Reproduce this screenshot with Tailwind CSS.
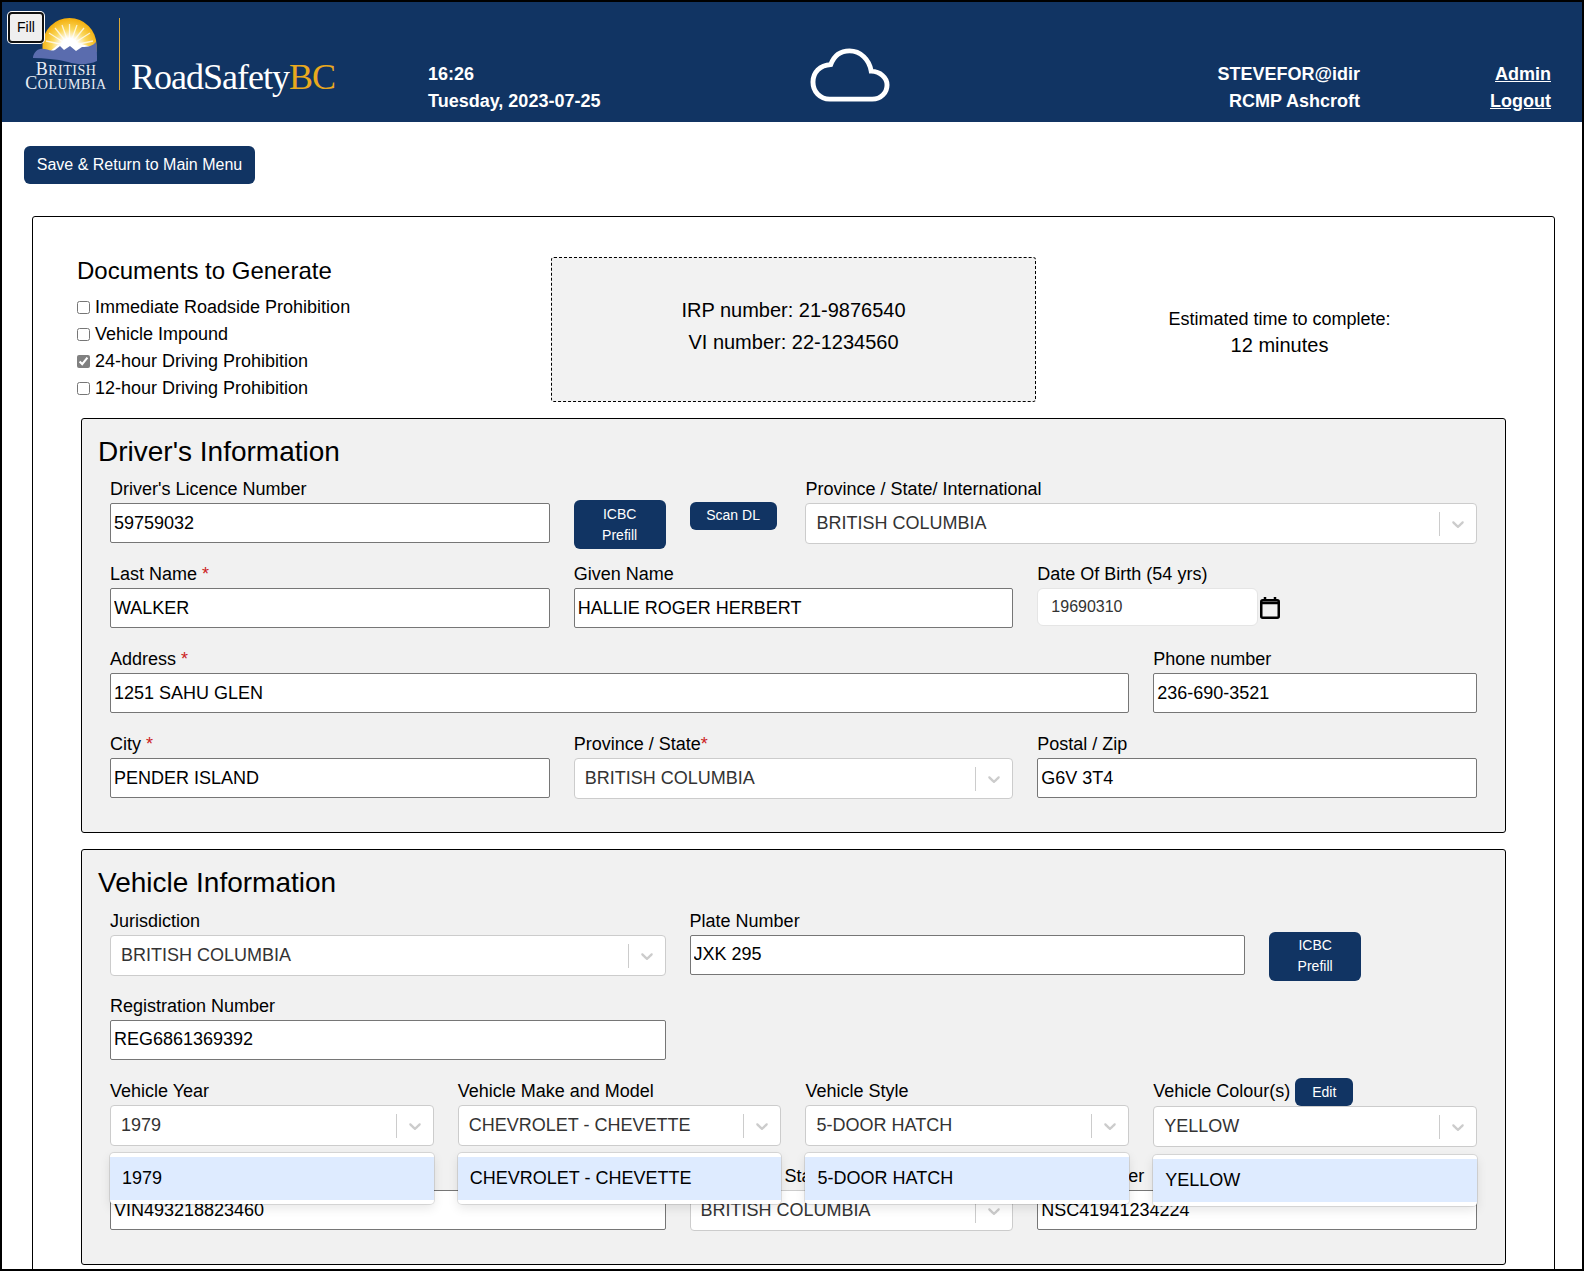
<!DOCTYPE html>
<html lang="en">

<head>
    <meta charset="UTF-8">
    <title>Road Safety BC</title>
    <script src="https://cdn.jsdelivr.net/npm/@tailwindcss/browser@4"></script>
</head>

<body class="font-['Liberation_Sans',Arial,sans-serif] text-black bg-white">
    <div class="relative h-[1271px] overflow-hidden border-2 border-black">

        <!-- Fill button -->
        <button class="absolute z-20 left-[6px] top-[10px] w-[36px] h-[31px] bg-[#efefef] border-2 border-[#101010] rounded-[4px] ring-1 ring-white text-[14px] text-black">Fill</button>

        <!-- Header -->
        <header class="h-[120px] bg-[#113463] flex text-white font-bold text-[18px] leading-[27px]">
            <div class="w-[426px] pl-[22px] pt-[15px] flex shrink-0">
                <div class="relative w-[84px] h-[73px] shrink-0">
                    <svg class="absolute left-0 top-0" width="84" height="50" viewBox="24 17 84 50">
                        <defs>
                            <radialGradient id="sun" gradientUnits="userSpaceOnUse" cx="69.500" cy="47" r="29">
                                <stop offset="0.3" stop-color="#ffffff" />
                                <stop offset="0.62" stop-color="#fbd75a" />
                                <stop offset="1" stop-color="#f3ad0a" />
                            </radialGradient>
                        </defs>
                        <path d="M42.500 45 A27 27 0 0 1 96.500 45 V52 H42.500 Z" fill="url(#sun)" />
                        <g stroke="#fff" stroke-width="1.300" opacity="0.75">
                            <path d="M69.500 46 V24 M69.500 46 L62 25 M69.500 46 L77 25 M69.500 46 L55 28 M69.500 46 L84 28 M69.500 46 L49 33 M69.500 46 L90 33 M69.500 46 L46 41 M69.500 46 L93 41" />
                        </g>
                        <path d="M49 52 L58 45 L63 47 L69 43 L74 47 L81 44 L92 47 L92 56 L49 56 Z" fill="#fff" />
                        <path d="M33 57 C34 53 36 50 40 49 C46 48 50 52 55 50 L60 46 L64 50 L70 46 L76 51 L82 47 C88 47 93 46 96 42 C97 48 97 55 97 61 C88 65 78 65 68 62 C56 59 44 58 33 58 Z" fill="#5a6cae" />
                    </svg>
                    <div class="absolute left-0 top-[45px] w-[84px] text-center font-['Liberation_Serif',serif] font-normal text-[14px] leading-[14px] tracking-[0.5px] text-[#e8ecf4]">
                        <div class="h-[14px] first-letter:text-[18px]">BRITISH</div>
                        <div class="h-[14px] first-letter:text-[18px] whitespace-nowrap">COLUMBIA</div>
                    </div>
                </div>
                <div class="w-px h-[72px] bg-[#d9a83a] mt-px ml-[11px]"></div>
                <div class="ml-[11px] mt-[38px] font-['Liberation_Serif',serif] font-normal text-[36px] leading-[44px] tracking-[-1px] whitespace-nowrap">RoadSafety<span class="text-[#e9a91e]">BC</span></div>
            </div>
            <div class="w-[382px] pt-[59px] shrink-0">
                <div>16:26</div>
                <div>Tuesday, 2023-07-25</div>
            </div>
            <div class="pt-[46px] shrink-0">
                <svg width="80" height="54" viewBox="0 0 81 57" preserveAspectRatio="none" fill="none" stroke="#fff" stroke-width="5">
                    <path d="M20 54 H63 C72 54 78 47 78 39 C78 31 71 25 62 24.500 C60 12 51 3 40 3 C30 3 24 9 21 17.500 C10 18 3 26 3 36 C3 46 10 54 20 54 Z" />
                </svg>
            </div>
            <div class="flex-1 pt-[59px] text-right pr-[222px]">
                <div>STEVEFOR@idir</div>
                <div>RCMP Ashcroft</div>
            </div>
            <div class="absolute right-[31px] top-[59px] text-right underline">
                <div><a href="#">Admin</a></div>
                <div><a href="#">Logout</a></div>
            </div>
        </header>

        <div class="pl-[22px] pt-[24px]">
            <button class="h-[38px] w-[231px] bg-[#113463] text-white rounded-[6px] text-[16px]">Save &amp; Return to Main Menu</button>
        </div>

        <!-- Main form box -->
        <main class="ml-[30px] mr-[27px] mt-[32px] h-[1200px] border border-black rounded-[3px] px-[44px]">

            <div class="flex h-[201px]">
                <div class="w-[474px] shrink-0 pt-[40px]">
                    <h2 class="text-[24px] leading-[28px] mb-[9px]">Documents to Generate</h2>
                    <label class="flex items-center h-[27px] text-[18px]"><input type="checkbox" class="mr-[5px] mb-[1px]">Immediate Roadside Prohibition</label>
                    <label class="flex items-center h-[27px] text-[18px]"><input type="checkbox" class="mr-[5px] mb-[1px]">Vehicle Impound</label>
                    <label class="flex items-center h-[27px] text-[18px]"><input type="checkbox" class="mr-[5px] mb-[1px] accent-[#808080]" checked>24-hour Driving Prohibition</label>
                    <label class="flex items-center h-[27px] text-[18px]"><input type="checkbox" class="mr-[5px] mb-[1px]">12-hour Driving Prohibition</label>
                </div>
                <div class="w-[485px] h-[145px] mt-[40px] shrink-0 bg-[#f2f2f2] border border-dashed border-black rounded-[3px] flex flex-col items-center justify-center text-[20px] leading-[32px] pb-[7px]">
                    <div>IRP number: 21-9876540</div>
                    <div>VI number: 22-1234560</div>
                </div>
                <div class="flex-1 text-center pt-[90px] pl-[13px]">
                    <div class="text-[18px] leading-[25px]">Estimated time to complete:</div>
                    <div class="text-[20px] leading-[27px]">12 minutes</div>
                </div>
            </div>

            <!-- Driver's Information -->
            <section class="mx-[4px] h-[415px] bg-[#f1f1f1] border border-black rounded-[3px] px-[28px]">
                <h2 class="-ml-[12px] text-[28px] leading-[34px] pt-[16px] h-[44px] box-content">Driver's Information</h2>
                <div class="grid grid-cols-12 gap-x-6 text-[18px]">
                    <div class="col-span-4 h-[85px]">
                        <label class="block h-[24px] leading-[21px]">Driver's Licence Number</label>
                        <input class="w-full h-[40px] px-[3px] bg-white border border-[#767676] rounded-[2px]" value="59759032">
                    </div>
                    <div class="col-span-1 pt-[21px]">
                        <button class="w-full h-[49px] bg-[#113463] text-white rounded-[6px] text-[14px] leading-[21px]">ICBC<br>Prefill</button>
                    </div>
                    <div class="col-span-1 pt-[22px]">
                        <button class="w-[87px] h-[28px] bg-[#113463] text-white rounded-[6px] text-[14px]">Scan DL</button>
                    </div>
                    <div class="col-span-6 h-[85px]">
                        <label class="block h-[24px] leading-[21px]">Province / State/ International</label>
                        <div class="h-[41px] flex items-center bg-white border border-[#cccccc] rounded-[4px] pl-[10px] text-[#333333]">
                            <span class="flex-1">BRITISH COLUMBIA</span>
                            <span class="w-px h-[24px] bg-[#cccccc]"></span>
                            <svg class="mx-[8px]" width="20" height="20" viewBox="0 0 20 20" fill="#cccccc"><path d="M4.516 7.548c0.436-0.446 1.043-0.481 1.576 0l3.908 3.747 3.908-3.747c0.533-0.481 1.141-0.446 1.574 0 0.436 0.445 0.408 1.197 0 1.615-0.406 0.418-4.695 4.502-4.695 4.502-0.217 0.223-0.502 0.335-0.787 0.335s-0.57-0.112-0.789-0.335c0 0-4.287-4.084-4.695-4.502s-0.436-1.17 0-1.615z" /></svg>
                        </div>
                    </div>

                    <div class="col-span-4 h-[85px]">
                        <label class="block h-[24px] leading-[21px]">Last Name <span class="text-[#cc2222]">*</span></label>
                        <input class="w-full h-[40px] px-[3px] bg-white border border-[#767676] rounded-[2px]" value="WALKER">
                    </div>
                    <div class="col-span-4 h-[85px]">
                        <label class="block h-[24px] leading-[21px]">Given Name</label>
                        <input class="w-full h-[40px] px-[3px] bg-white border border-[#767676] rounded-[2px]" value="HALLIE ROGER HERBERT">
                    </div>
                    <div class="col-span-4 h-[85px]">
                        <label class="block h-[24px] leading-[21px]">Date Of Birth (54 yrs)</label>
                        <div class="flex items-start">
                            <input class="w-[221px] h-[38px] pl-[13px] bg-white border border-[#e5e5e5] rounded-[6px] text-[16px] text-[#333333]" value="19690310">
                            <svg class="ml-[1px] mt-[8px]" width="22" height="24" viewBox="0 0 22 24" fill="none" stroke="#000" stroke-width="2.500"><rect x="2.250" y="4.250" width="17.500" height="17.500" rx="1.500" /><path d="M2 7 H20 M6 1 V4 M16 1 V4" /></svg>
                        </div>
                    </div>

                    <div class="col-span-9 h-[85px]">
                        <label class="block h-[24px] leading-[21px]">Address <span class="text-[#cc2222]">*</span></label>
                        <input class="w-full h-[40px] px-[3px] bg-white border border-[#767676] rounded-[2px]" value="1251 SAHU GLEN">
                    </div>
                    <div class="col-span-3 h-[85px]">
                        <label class="block h-[24px] leading-[21px]">Phone number</label>
                        <input class="w-full h-[40px] px-[3px] bg-white border border-[#767676] rounded-[2px]" value="236-690-3521">
                    </div>

                    <div class="col-span-4 h-[85px]">
                        <label class="block h-[24px] leading-[21px]">City <span class="text-[#cc2222]">*</span></label>
                        <input class="w-full h-[40px] px-[3px] bg-white border border-[#767676] rounded-[2px]" value="PENDER ISLAND">
                    </div>
                    <div class="col-span-4 h-[85px]">
                        <label class="block h-[24px] leading-[21px]">Province / State<span class="text-[#cc2222]">*</span></label>
                        <div class="h-[41px] flex items-center bg-white border border-[#cccccc] rounded-[4px] pl-[10px] text-[#333333]">
                            <span class="flex-1">BRITISH COLUMBIA</span>
                            <span class="w-px h-[24px] bg-[#cccccc]"></span>
                            <svg class="mx-[8px]" width="20" height="20" viewBox="0 0 20 20" fill="#cccccc"><path d="M4.516 7.548c0.436-0.446 1.043-0.481 1.576 0l3.908 3.747 3.908-3.747c0.533-0.481 1.141-0.446 1.574 0 0.436 0.445 0.408 1.197 0 1.615-0.406 0.418-4.695 4.502-4.695 4.502-0.217 0.223-0.502 0.335-0.787 0.335s-0.57-0.112-0.789-0.335c0 0-4.287-4.084-4.695-4.502s-0.436-1.17 0-1.615z" /></svg>
                        </div>
                    </div>
                    <div class="col-span-4 h-[85px]">
                        <label class="block h-[24px] leading-[21px]">Postal / Zip</label>
                        <input class="w-full h-[40px] px-[3px] bg-white border border-[#767676] rounded-[2px]" value="G6V 3T4">
                    </div>
                </div>
            </section>

            <!-- Vehicle Information -->
            <section class="mx-[4px] mt-[16px] h-[416px] bg-[#f1f1f1] border border-black rounded-[3px] px-[28px]">
                <h2 class="-ml-[12px] text-[28px] leading-[34px] pt-[16px] h-[45px] box-content">Vehicle Information</h2>
                <div class="grid grid-cols-12 gap-x-6 text-[18px]">
                    <div class="col-span-5 h-[85px]">
                        <label class="block h-[24px] leading-[21px]">Jurisdiction</label>
                        <div class="h-[41px] flex items-center bg-white border border-[#cccccc] rounded-[4px] pl-[10px] text-[#333333]">
                            <span class="flex-1">BRITISH COLUMBIA</span>
                            <span class="w-px h-[24px] bg-[#cccccc]"></span>
                            <svg class="mx-[8px]" width="20" height="20" viewBox="0 0 20 20" fill="#cccccc"><path d="M4.516 7.548c0.436-0.446 1.043-0.481 1.576 0l3.908 3.747 3.908-3.747c0.533-0.481 1.141-0.446 1.574 0 0.436 0.445 0.408 1.197 0 1.615-0.406 0.418-4.695 4.502-4.695 4.502-0.217 0.223-0.502 0.335-0.787 0.335s-0.57-0.112-0.789-0.335c0 0-4.287-4.084-4.695-4.502s-0.436-1.17 0-1.615z" /></svg>
                        </div>
                    </div>
                    <div class="col-span-5 h-[85px]">
                        <label class="block h-[24px] leading-[21px]">Plate Number</label>
                        <input class="w-full h-[40px] px-[3px] pb-[2px] bg-white border border-[#767676] rounded-[2px]" value="JXK 295">
                    </div>
                    <div class="col-span-1 pt-[21px]">
                        <button class="w-full h-[49px] pb-[2px] bg-[#113463] text-white rounded-[6px] text-[14px] leading-[21px]">ICBC<br>Prefill</button>
                    </div>
                    <div class="col-span-1"></div>

                    <div class="col-span-5 h-[85px]">
                        <label class="block h-[24px] leading-[21px]">Registration Number</label>
                        <input class="w-full h-[40px] px-[3px] pb-[2px] bg-white border border-[#767676] rounded-[2px]" value="REG6861369392">
                    </div>
                    <div class="col-span-7"></div>

                    <div class="col-span-3 h-[85px] relative">
                        <label class="block h-[24px] leading-[21px]">Vehicle Year</label>
                        <div class="h-[41px] flex items-center bg-white border border-[#cccccc] rounded-[4px] pl-[10px] text-[#333333]">
                            <span class="flex-1">1979</span>
                            <span class="w-px h-[24px] bg-[#cccccc]"></span>
                            <svg class="mx-[8px]" width="20" height="20" viewBox="0 0 20 20" fill="#cccccc"><path d="M4.516 7.548c0.436-0.446 1.043-0.481 1.576 0l3.908 3.747 3.908-3.747c0.533-0.481 1.141-0.446 1.574 0 0.436 0.445 0.408 1.197 0 1.615-0.406 0.418-4.695 4.502-4.695 4.502-0.217 0.223-0.502 0.335-0.787 0.335s-0.57-0.112-0.789-0.335c0 0-4.287-4.084-4.695-4.502s-0.436-1.17 0-1.615z" /></svg>
                        </div>
                        <div class="absolute z-10 left-0 right-0 top-[72px] h-[51px] py-[4px] bg-white rounded-[4px] shadow-[0_0_0_1px_rgba(0,0,0,0.1),0_4px_11px_rgba(0,0,0,0.1)]">
                            <div class="h-[43px] leading-[43px] pl-[12px] bg-[#deebff]">1979</div>
                        </div>
                    </div>
                    <div class="col-span-3 h-[85px] relative">
                        <label class="block h-[24px] leading-[21px]">Vehicle Make and Model</label>
                        <div class="h-[41px] flex items-center bg-white border border-[#cccccc] rounded-[4px] pl-[10px] text-[#333333]">
                            <span class="flex-1">CHEVROLET - CHEVETTE</span>
                            <span class="w-px h-[24px] bg-[#cccccc]"></span>
                            <svg class="mx-[8px]" width="20" height="20" viewBox="0 0 20 20" fill="#cccccc"><path d="M4.516 7.548c0.436-0.446 1.043-0.481 1.576 0l3.908 3.747 3.908-3.747c0.533-0.481 1.141-0.446 1.574 0 0.436 0.445 0.408 1.197 0 1.615-0.406 0.418-4.695 4.502-4.695 4.502-0.217 0.223-0.502 0.335-0.787 0.335s-0.57-0.112-0.789-0.335c0 0-4.287-4.084-4.695-4.502s-0.436-1.17 0-1.615z" /></svg>
                        </div>
                        <div class="absolute z-10 left-0 right-0 top-[72px] h-[51px] py-[4px] bg-white rounded-[4px] shadow-[0_0_0_1px_rgba(0,0,0,0.1),0_4px_11px_rgba(0,0,0,0.1)]">
                            <div class="h-[43px] leading-[43px] pl-[12px] bg-[#deebff]">CHEVROLET - CHEVETTE</div>
                        </div>
                    </div>
                    <div class="col-span-3 h-[85px] relative">
                        <label class="block h-[24px] leading-[21px]">Vehicle Style</label>
                        <div class="h-[41px] flex items-center bg-white border border-[#cccccc] rounded-[4px] pl-[10px] text-[#333333]">
                            <span class="flex-1">5-DOOR HATCH</span>
                            <span class="w-px h-[24px] bg-[#cccccc]"></span>
                            <svg class="mx-[8px]" width="20" height="20" viewBox="0 0 20 20" fill="#cccccc"><path d="M4.516 7.548c0.436-0.446 1.043-0.481 1.576 0l3.908 3.747 3.908-3.747c0.533-0.481 1.141-0.446 1.574 0 0.436 0.445 0.408 1.197 0 1.615-0.406 0.418-4.695 4.502-4.695 4.502-0.217 0.223-0.502 0.335-0.787 0.335s-0.57-0.112-0.789-0.335c0 0-4.287-4.084-4.695-4.502s-0.436-1.17 0-1.615z" /></svg>
                        </div>
                        <div class="absolute z-10 left-0 right-0 top-[72px] h-[51px] py-[4px] bg-white rounded-[4px] shadow-[0_0_0_1px_rgba(0,0,0,0.1),0_4px_11px_rgba(0,0,0,0.1)]">
                            <div class="h-[43px] leading-[43px] pl-[12px] bg-[#deebff]">5-DOOR HATCH</div>
                        </div>
                    </div>
                    <div class="col-span-3 h-[85px] relative">
                        <label class="flex h-[25px] leading-[21px]">Vehicle Colour(s)<button class="ml-[5px] -mt-[3px] w-[58px] h-[28px] bg-[#113463] text-white rounded-[6px] text-[14px]">Edit</button></label>
                        <div class="h-[41px] flex items-center bg-white border border-[#cccccc] rounded-[4px] pl-[10px] text-[#333333]">
                            <span class="flex-1">YELLOW</span>
                            <span class="w-px h-[24px] bg-[#cccccc]"></span>
                            <svg class="mx-[8px]" width="20" height="20" viewBox="0 0 20 20" fill="#cccccc"><path d="M4.516 7.548c0.436-0.446 1.043-0.481 1.576 0l3.908 3.747 3.908-3.747c0.533-0.481 1.141-0.446 1.574 0 0.436 0.445 0.408 1.197 0 1.615-0.406 0.418-4.695 4.502-4.695 4.502-0.217 0.223-0.502 0.335-0.787 0.335s-0.57-0.112-0.789-0.335c0 0-4.287-4.084-4.695-4.502s-0.436-1.17 0-1.615z" /></svg>
                        </div>
                        <div class="absolute z-10 left-0 right-0 top-[74px] h-[51px] py-[4px] bg-white rounded-[4px] shadow-[0_0_0_1px_rgba(0,0,0,0.1),0_4px_11px_rgba(0,0,0,0.1)]">
                            <div class="h-[43px] leading-[43px] pl-[12px] bg-[#deebff]">YELLOW</div>
                        </div>
                    </div>

                    <div class="col-span-5 h-[85px] pt-[24px]">
                        <input class="w-full h-[40px] px-[3px] bg-white border border-[#767676] rounded-[2px]" value="VIN493218823460">
                    </div>
                    <div class="col-span-3 h-[85px]">
                        <label class="block h-[24px] leading-[21px]">NSC Prov / State</label>
                        <div class="h-[41px] flex items-center bg-white border border-[#cccccc] rounded-[4px] pl-[10px] text-[#333333]">
                            <span class="flex-1">BRITISH COLUMBIA</span>
                            <span class="w-px h-[24px] bg-[#cccccc]"></span>
                            <svg class="mx-[8px]" width="20" height="20" viewBox="0 0 20 20" fill="#cccccc"><path d="M4.516 7.548c0.436-0.446 1.043-0.481 1.576 0l3.908 3.747 3.908-3.747c0.533-0.481 1.141-0.446 1.574 0 0.436 0.445 0.408 1.197 0 1.615-0.406 0.418-4.695 4.502-4.695 4.502-0.217 0.223-0.502 0.335-0.787 0.335s-0.57-0.112-0.789-0.335c0 0-4.287-4.084-4.695-4.502s-0.436-1.17 0-1.615z" /></svg>
                        </div>
                    </div>
                    <div class="col-span-4 h-[85px]">
                        <label class="block h-[24px] leading-[21px]">NSC Number</label>
                        <input class="w-full h-[40px] px-[3px] bg-white border border-[#767676] rounded-[2px]" value="NSC41941234224">
                    </div>
                </div>
            </section>
        </main>
    </div>
</body>

</html>
